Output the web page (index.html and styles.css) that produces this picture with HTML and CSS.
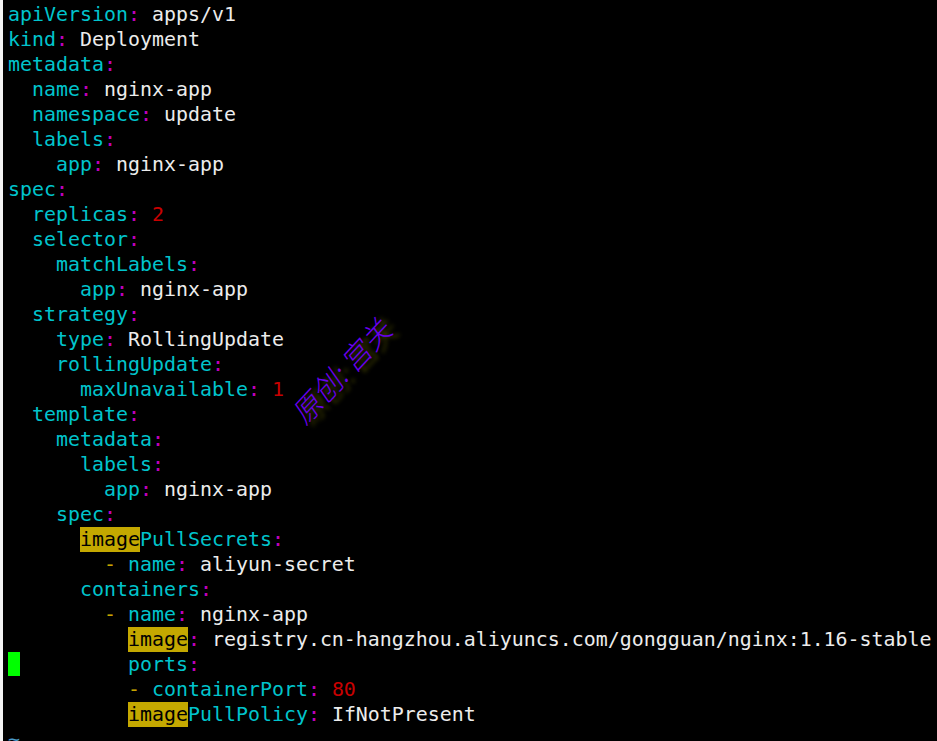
FILE: index.html
```html
<!DOCTYPE html>
<html lang="en">
<head>
<meta charset="utf-8">
<title>deployment.yaml</title>
<link rel="stylesheet" href="styles.css">
</head>
<body>
<main class="term">
<pre class="code"><span class="k">apiVersion</span><span class="c">:</span> apps/v1
<span class="k">kind</span><span class="c">:</span> Deployment
<span class="k">metadata</span><span class="c">:</span>
  <span class="k">name</span><span class="c">:</span> nginx-app
  <span class="k">namespace</span><span class="c">:</span> update
  <span class="k">labels</span><span class="c">:</span>
    <span class="k">app</span><span class="c">:</span> nginx-app
<span class="k">spec</span><span class="c">:</span>
  <span class="k">replicas</span><span class="c">:</span> <span class="n">2</span>
  <span class="k">selector</span><span class="c">:</span>
    <span class="k">matchLabels</span><span class="c">:</span>
      <span class="k">app</span><span class="c">:</span> nginx-app
  <span class="k">strategy</span><span class="c">:</span>
    <span class="k">type</span><span class="c">:</span> RollingUpdate
    <span class="k">rollingUpdate</span><span class="c">:</span>
      <span class="k">maxUnavailable</span><span class="c">:</span> <span class="n">1</span>
  <span class="k">template</span><span class="c">:</span>
    <span class="k">metadata</span><span class="c">:</span>
      <span class="k">labels</span><span class="c">:</span>
        <span class="k">app</span><span class="c">:</span> nginx-app
    <span class="k">spec</span><span class="c">:</span>
      <span class="h">image</span><span class="k">PullSecrets</span><span class="c">:</span>
        <span class="d">-</span> <span class="k">name</span><span class="c">:</span> aliyun-secret
      <span class="k">containers</span><span class="c">:</span>
        <span class="d">-</span> <span class="k">name</span><span class="c">:</span> nginx-app
          <span class="h">image</span><span class="c">:</span> registry.cn-hangzhou.aliyuncs.com/gongguan/nginx:1.16-stable
<span class="cursor"> </span>         <span class="k">ports</span><span class="c">:</span>
          <span class="d">-</span> <span class="k">containerPort</span><span class="c">:</span> <span class="n">80</span>
          <span class="h">image</span><span class="k">PullPolicy</span><span class="c">:</span> IfNotPresent
<span class="tilde">~</span></pre>
<div class="mark">原创: 宫关</div>
</main>
</body>
</html>
```
FILE: styles.css
```css
html, body {
  margin: 0;
  height: 100%;
  background: #000;
  overflow: hidden;
}
.term {
  position: relative;
  height: 741px;
  background: #000;
  border-left: 3px solid #f4f4f4;
  box-sizing: border-box;
  padding: 2px 0 0 5px;
  overflow: hidden;
}
.code {
  margin: 0;
  font-family: "DejaVu Sans Mono", monospace;
  font-size: 19.93px;
  line-height: 25px;
  color: #ececec;
  white-space: pre;
}
.k { color: #00c4cc; }
.c { color: #c000c0; }
.n { color: #c80000; }
.d { color: #c8a400; }
.h {
  display: inline-block;
  height: 25px;
  vertical-align: top;
  background: #c4a800;
  color: #000;
}
.cursor {
  display: inline-block;
  height: 24px;
  vertical-align: top;
  background: #00ff00;
}
.tilde { color: #4a9ac8; }
.mark {
  position: absolute;
  left: 274px;
  top: 351px;
  font-family: "Noto Sans CJK SC", sans-serif;
  font-weight: 300;
  font-size: 29px;
  line-height: 34px;
  white-space: nowrap;
  color: #6a00f0;
  text-shadow: 5px 5px 4px #4c4c00;
  transform: rotate(-47deg) skewX(-12deg);
}
```
